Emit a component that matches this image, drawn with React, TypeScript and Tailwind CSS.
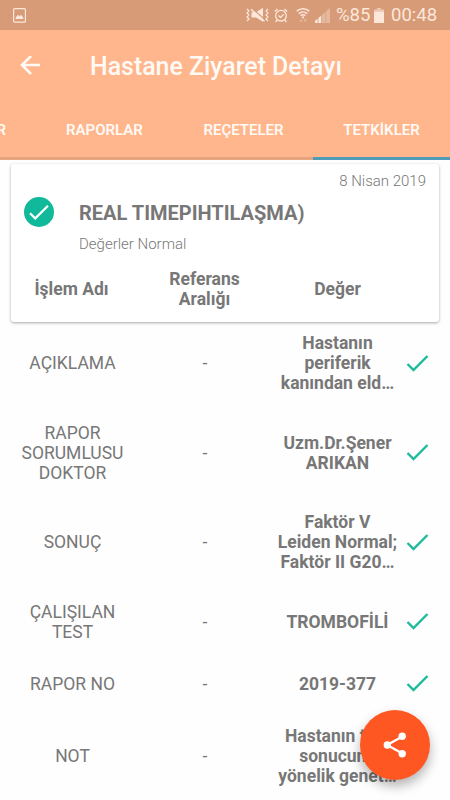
import React from 'react';

interface TestRow {
  name: string[];
  reference: string;
  value: string[];
  height: string;
}

const rows: TestRow[] = [
  { name: ['AÇIKLAMA'], reference: '-', value: ['Hastanın', 'periferik', 'kanından eld…'], height: 'h-[90px]' },
  { name: ['RAPOR', 'SORUMLUSU', 'DOKTOR'], reference: '-', value: ['Uzm.Dr.Şener', 'ARIKAN'], height: 'h-[89px]' },
  { name: ['SONUÇ'], reference: '-', value: ['Faktör V', 'Leiden Normal;', 'Faktör II G20…'], height: 'h-[90px]' },
  { name: ['ÇALIŞILAN', 'TEST'], reference: '-', value: ['TROMBOFİLİ'], height: 'h-[69px]' },
  { name: ['RAPOR NO'], reference: '-', value: ['2019-377'], height: 'h-[55px]' },
  { name: ['NOT'], reference: '-', value: ['Hastanın test', 'sonucuna', 'yönelik genet…'], height: 'h-[90px]' },
];

const Lines: React.FC<{ lines: string[] }> = ({ lines }) => (
  <>
    {lines.map((line) => (
      <span key={line} className="block whitespace-nowrap">
        {line}
      </span>
    ))}
  </>
);

const StatusBar: React.FC = () => (
  <div className="flex h-[30px] items-center bg-[#d79b78] pr-[13px] pl-[13px] text-[#fce7da]">
    <svg className="h-[15px] w-[13px]" viewBox="0 0 13 15" fill="none">
      <rect x="0.6" y="0.6" width="11.8" height="13.6" rx="1" stroke="currentColor" strokeWidth="1.2" />
      <path d="M2.7 11V9.5L5 6.7l1.5 1.6L8 6.7l2.3 2.8V11z" fill="currentColor" />
    </svg>
    {/* Vibrate / muted speaker */}
    <svg className="ml-auto h-4 w-[23px]" viewBox="0 0 23 16" fill="none" stroke="currentColor">
      <path d="M1 2l2 2-2 2 2 2-2 2 2 2-2 2M22 2l-2 2 2 2-2 2 2 2-2 2 2 2" strokeWidth="1.2" />
      <path d="M5.5 5.2H10L17 .8v14l-7-4.3H5.5z" fill="currentColor" stroke="none" />
      <path d="M6 1.5l12.5 10.8" stroke="#d79b78" strokeWidth="1.3" />
      <path d="M5 2.2l13.5 12" strokeWidth="1.5" />
    </svg>
    {/* Alarm */}
    <svg className="ml-[5px] h-[15px] w-[14px]" viewBox="0 0 14 15" fill="none" stroke="currentColor" strokeWidth="1.3">
      <circle cx="7" cy="7.7" r="5.3" />
      <path d="M4.5 7.5l2 2 3.3-3.4M.8 3.5L3.5 1M13.2 3.5L10.5 1M3.2 12l-1.6 2M10.8 12l1.6 2" />
    </svg>
    {/* Wi-Fi */}
    <svg className="ml-[8px] h-4 w-[14px]" viewBox="0 0 14 16" fill="none" stroke="currentColor" strokeWidth="1.6">
      <path d="M.8 4.2c3.6-3.3 8.8-3.3 12.4 0M2.8 6.6c2.4-2.2 6-2.2 8.4 0M4.7 8.7c1.4-1.2 3.2-1.2 4.6 0" />
      <circle cx="7" cy="10.3" r="1.1" fill="currentColor" stroke="none" />
      <path d="M3.6 14.5L5.2 12l1.6 2.5zM7.6 12.5l1.6 2.8 1.6-2.8z" fill="currentColor" stroke="none" opacity="0.45" />
    </svg>
    {/* Signal */}
    <svg className="ml-[5px] h-[15px] w-[15px]" viewBox="0 0 15 15" fill="currentColor">
      <path d="M0 15v-2.2l2.6-2V15zM3.4 15v-5l2.8-2.4V15z" />
      <path d="M7 15V7l3.6-3.3V15zM11.2 15V3.2L15 0v15z" opacity="0.4" />
    </svg>
    <span className="ml-[6px] w-[35px] text-[18.5px] leading-[30px] whitespace-nowrap">%85</span>
    <svg className="ml-[3px] h-[15px] w-[10px]" viewBox="0 0 10 15" fill="currentColor">
      <path d="M3 0h4v1.5H3z" opacity="0.6" />
      <path d="M0 1.5h10v2H0z" opacity="0.6" />
      <path d="M0 3.5h10V15H0z" />
    </svg>
    <span className="ml-[7px] w-[46px] text-[18.5px] leading-[30px] whitespace-nowrap">00:48</span>
  </div>
);

const Header: React.FC = () => (
  <header className="h-[130px] bg-[#ffb68c] text-[#fffaf5]">
    <div className="flex h-[70px] items-center pt-[2px] pl-5">
      <svg className="h-5 w-5" viewBox="0 0 20 20" fill="none" stroke="currentColor" strokeWidth="2.6">
        <path d="M20 9H2M11 0L2 9l9 9" />
      </svg>
      <h1 className="ml-[50px] pt-[2px] text-[24.9px] font-medium whitespace-nowrap">Hastane Ziyaret Detayı</h1>
    </div>
    <nav className="grid h-[60px] grid-cols-[34px_142px_137px_137px] text-center text-[15px] font-semibold">
      {/* Scrolled mostly out of view */}
      <div className="flex items-center border-b-[3px] border-[#e6a47e] pt-[4px]">
        <span className="flex w-[6px] justify-end whitespace-nowrap">REÇETELER</span>
      </div>
      <div className="flex items-center justify-center border-b-[3px] border-[#e6a47e] pt-[4px] pr-[1px]">RAPORLAR</div>
      <div className="flex items-center justify-center border-b-[3px] border-[#e6a47e] pt-[4px] pr-[2px]">REÇETELER</div>
      <div className="flex items-center justify-center border-b-[3px] border-[#4d9cb8] pt-[4px]">TETKİKLER</div>
    </nav>
  </header>
);

const ResultCard: React.FC = () => (
  <section className="mx-[11px] mt-1 h-[158px] rounded-[3px] bg-white shadow-[0_1px_3px_rgba(0,0,0,0.35)]">
    <div className="h-[34px] pt-[7px] pr-[13px] text-right text-[15px] leading-5 font-light">8 Nisan 2019</div>
    <div className="flex h-[59px]">
      <svg className="-mt-px ml-[13px] h-[30px] w-[30px]" viewBox="0 0 30 30" fill="none">
        <circle cx="15" cy="15" r="15" fill="#0fb999" />
        <path d="M6 16.2l5.2 5.2L24 8.8" stroke="white" strokeWidth="2.2" />
      </svg>
      <div className="ml-[25px]">
        <h2 className="text-[20px] leading-[30px] font-bold whitespace-nowrap">REAL TIMEPIHTILAŞMA)</h2>
        <p className="mt-[6px] text-[15px] leading-5 font-light">Değerler Normal</p>
      </div>
    </div>
    <div className="-ml-[6px] grid h-[64px] grid-cols-[133px_133px_133px] items-center text-center text-[17.5px] leading-5 font-bold">
      <span>İşlem Adı</span>
      <span>
        <Lines lines={['Referans', 'Aralığı']} />
      </span>
      <span>Değer</span>
    </div>
  </section>
);

const App: React.FC = () => {
  return (
    <div className="relative h-[800px] w-[450px] overflow-hidden bg-[#fefefe] font-['Roboto',sans-serif] text-[#777777]">
      <StatusBar />
      <Header />
      <ResultCard />

      {/* Test results */}
      <div className="-mt-1 pl-[6px] text-center text-[17.5px] leading-5">
        {rows.map((row) => (
          <div key={row.name[0]} className={`grid grid-cols-[133px_132px_133px_27px] items-center ${row.height}`}>
            <div>
              <Lines lines={row.name} />
            </div>
            <div>{row.reference}</div>
            <div className="font-bold">
              <Lines lines={row.value} />
            </div>
            <svg className="mx-auto h-[17px] w-[23px]" viewBox="0 0 23 17" fill="none" stroke="#1dba9b" strokeWidth="2.4">
              <path d="M1.5 9l6 6L21.5 1" />
            </svg>
          </div>
        ))}
      </div>

      {/* Share button */}
      <button className="absolute top-[710px] left-[360px] flex h-[70px] w-[70px] items-center justify-center rounded-full bg-[#ff5722] shadow-[0_6px_12px_rgba(0,0,0,0.3)]">
        <svg className="h-[26px] w-[24px]" viewBox="0 0 24 26" fill="white" stroke="white">
          <path d="M19.5 4.5L4 13l15.5 8.5" fill="none" strokeWidth="2.3" />
          <circle cx="4.3" cy="13" r="3.7" stroke="none" />
          <circle cx="19.2" cy="4.3" r="3.7" stroke="none" />
          <circle cx="19.2" cy="21.7" r="3.7" stroke="none" />
        </svg>
      </button>
    </div>
  );
};

export default App;
